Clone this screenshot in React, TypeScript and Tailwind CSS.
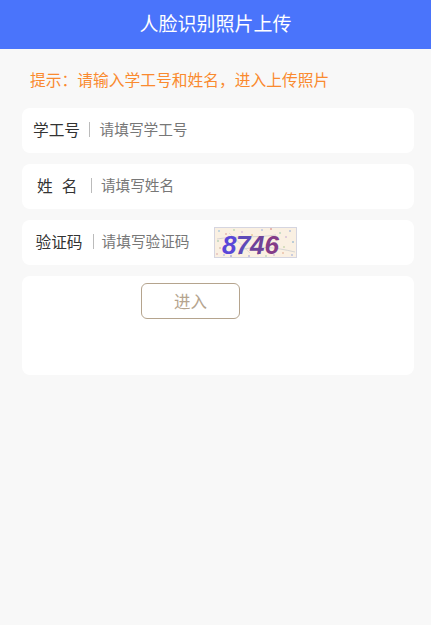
const CJK = "font-['Noto_Sans_CJK_SC','Noto_Sans',sans-serif]";

function Captcha() {
  // noise dots scattered over the captcha image
  const dots = [
    [5, 4, "#7fb4d8"], [12, 7, "#d88f8f"], [20, 3, "#9ccf9c"], [28, 5, "#c9a0d8"], [38, 8, "#e0b070"],
    [48, 3, "#8fa8e0"], [57, 2, "#d07070"], [66, 6, "#8fc8a8"], [76, 4, "#7f9fd8"], [4, 14, "#8fc0a0"],
    [79, 15, "#6f9fc8"], [72, 10, "#c09fd0"], [3, 27, "#d89f9f"], [10, 28, "#8fa8e0"], [17, 29, "#7f7fd0"],
    [25, 27, "#c8b070"], [35, 29, "#8f8fd8"], [44, 27, "#d08fa0"], [52, 29, "#9fc89f"], [60, 28, "#c8a0c8"],
    [69, 26, "#e0a080"], [78, 28, "#8fa0d8"], [70, 20, "#b0c890"], [6, 21, "#c8a890"],
  ] as const;
  return (
    <svg width="83" height="31" viewBox="0 0 83 31" className="block shrink-0 overflow-visible">
      <rect x="0.5" y="0.5" width="82" height="30" fill="#faf0e2" stroke="#d5d5e0" />
      <path d="M3 12 C20 9 40 11 62 8" stroke="#c8c4cc" strokeWidth="0.7" fill="none" />
      <path d="M30 22 C45 19 60 20 81 25" stroke="#c4c8cc" strokeWidth="0.7" fill="none" />
      <path d="M15 6 L36 26" stroke="#d4ccc8" strokeWidth="0.6" fill="none" />
      {dots.map(([x, y, c], i) => (
        <circle key={i} cx={x} cy={y} r="0.8" fill={c} />
      ))}
      <g fontFamily="'Liberation Sans', sans-serif" fontSize="26" fontWeight="700" fontStyle="italic">
        <text x="8" y="27" fill="#5a48d8">8</text>
        <text x="22" y="27" fill="#5f4ab8">7</text>
        <text x="36" y="27" fill="#6d4299">4</text>
        <text x="50.5" y="27" fill="#843c88">6</text>
      </g>
    </svg>
  );
}

function Row({
  label,
  placeholder,
  pl,
  sep,
  gap,
  children,
}: {
  label: React.ReactNode;
  placeholder: string;
  pl: string;
  sep: string;
  gap: string;
  children?: React.ReactNode;
}) {
  return (
    <div className={`flex h-[45px] items-center rounded-lg bg-white pb-[2px] ${pl}`}>
      <span className="text-[15.7px] leading-none text-[#333]">{label}</span>
      <span className={`h-[15px] w-px bg-[#bbb] ${sep}`} />
      <span className={`w-[89px] shrink-0 whitespace-nowrap text-[14.67px] leading-none text-[#777] ${gap}`}>
        {placeholder}
      </span>
      {children}
    </div>
  );
}

export default function App() {
  return (
    <main lang="zh-CN" className={`min-h-[625px] bg-[#f8f8f8] ${CJK}`}>
      <header className="flex h-[49px] items-center justify-center bg-[#4a74fb] pb-[3px] text-[19px] text-white">
        人脸识别照片上传
      </header>
      <p className="mt-[21px] px-[30px] text-[15.75px] leading-[20px] whitespace-nowrap text-[#fa8a2f]">
        {"提示\uFF1A请输入学工号和姓名\uFF0C进入上传照片"}
      </p>
      <section className="mr-[17px] ml-[22px] mt-[18px] flex flex-col gap-[11px]">
        <Row label="学工号" placeholder="请填写学工号" pl="pl-[11px]" sep="ml-[9px]" gap="ml-[9.5px]" />
        <Row
          label={
            <span className="flex gap-[9px]">
              <span>姓</span>
              <span>名</span>
            </span>
          }
          placeholder="请填写姓名"
          pl="pl-[15px]"
          sep="ml-[14px]"
          gap="ml-[8.5px]"
        />
        <Row label="验证码" placeholder="请填写验证码" pl="pl-[13.5px]" sep="ml-[10px]" gap="ml-[8px]">
          <span className="mt-[2px] ml-[23.5px]">
            <Captcha />
          </span>
        </Row>
        <div className="flex h-[99px] flex-col rounded-lg bg-white pl-[119px] pt-[7px]">
          <button className="h-[36px] w-[99px] rounded-md border border-[#b5a48e] bg-white text-[16.5px] text-[#b5a48e]">
            进入
          </button>
        </div>
      </section>
    </main>
  );
}
